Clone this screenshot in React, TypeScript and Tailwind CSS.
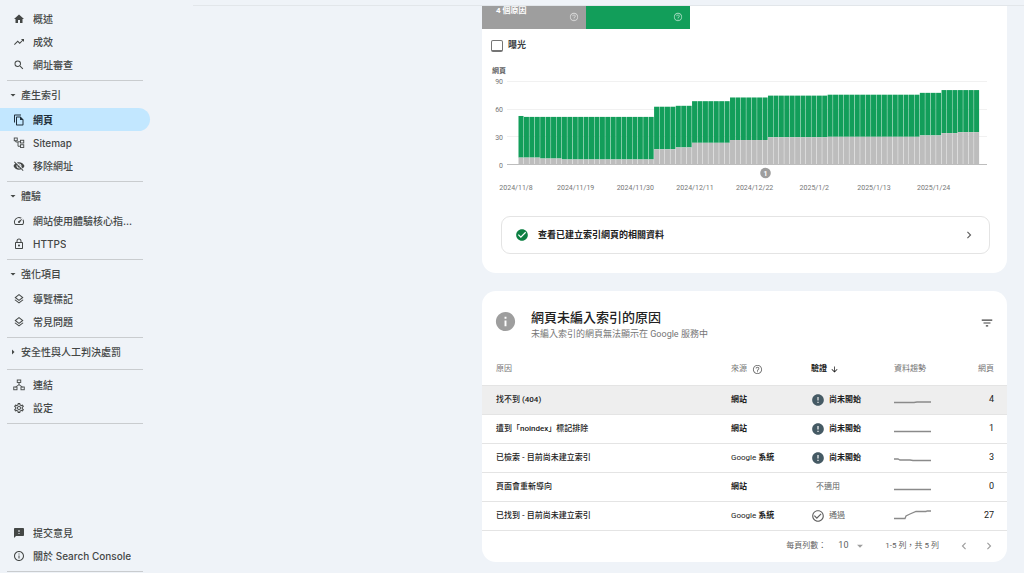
import type { ComponentType, ReactNode } from 'react';
import {
  MdArrowDownward,
  MdArrowDropDown,
  MdArrowRight,
  MdCheckCircle,
  MdCheckCircleOutline,
  MdChevronLeft,
  MdChevronRight,
  MdError,
  MdFeedback,
  MdFilterList,
  MdHelpOutline,
  MdHome,
  MdInfo,
  MdInfoOutline,
  MdOutlineFileCopy,
  MdOutlineLayers,
  MdOutlineLock,
  MdOutlineSettings,
  MdOutlineSpeed,
  MdSearch,
  MdTrendingUp,
  MdVisibilityOff,
} from 'react-icons/md';

type Icon = ComponentType<{ className?: string }>;

function SitemapIcon({ className }: { className?: string }) {
  return (
    <svg viewBox="0 0 24 24" width="1em" height="1em" fill="none" stroke="currentColor" strokeWidth="1.8" className={className}>
      <rect x="2.500" y="2" width="6" height="5.500" />
      <rect x="15" y="6.500" width="6.500" height="5.500" />
      <rect x="15" y="15.500" width="6.500" height="5.500" />
      <path d="M5.500 7.500V10H10v8.500H15M10 9.500H15" />
    </svg>
  );
}

function LinksIcon({ className }: { className?: string }) {
  return (
    <svg viewBox="0 0 24 24" width="1em" height="1em" fill="none" stroke="currentColor" strokeWidth="1.8" className={className}>
      <rect x="8.500" y="2" width="7" height="5" />
      <rect x="1.500" y="16" width="6.500" height="5.500" />
      <rect x="16" y="16" width="6.500" height="5.500" />
      <path d="M12 7v5M5 16 12 11.500 19 16" />
    </svg>
  );
}

function NavItem({ icon: Glyph, label, active = false }: { icon: Icon; label: string; active?: boolean }) {
  return (
    <li>
      <a
        href="#"
        aria-current={active ? 'page' : undefined}
        className={
          active
            ? 'flex h-[23px] w-[150px] items-center gap-2 rounded-r-full bg-[#c2e7ff] pl-[13px] font-bold text-[#1f2f3b]'
            : 'flex h-[23px] w-[150px] items-center gap-2 pl-[13px]'
        }
      >
        <Glyph className="size-3 shrink-0" />
        <span className="truncate pt-px">{label}</span>
      </a>
    </li>
  );
}

function NavHeading({ label, open = true }: { label: string; open?: boolean }) {
  return (
    <button type="button" aria-expanded={open} className="flex h-[27px] items-center gap-0.5 pl-[7px]">
      {open ? <MdArrowDropDown className="size-3" /> : <MdArrowRight className="size-3" />}
      <span className="pt-px">{label}</span>
    </button>
  );
}

function NavGroup({ children }: { children: ReactNode }) {
  return (
    <div>
      {children}
      <hr className="mt-1 ml-[7px] w-[136px] border-t border-[#c9cccf]" />
    </div>
  );
}

function Sidebar() {
  return (
    <nav className="flex w-[193px] shrink-0 flex-col pt-[7px] pb-px text-[10px] font-medium text-[#444746] [font-family:Inter,'Noto_Sans_CJK_TC',sans-serif]">
      <NavGroup>
        <ul>
          <NavItem icon={MdHome} label="概述" />
          <NavItem icon={MdTrendingUp} label="成效" />
          <NavItem icon={MdSearch} label="網址審查" />
        </ul>
      </NavGroup>
      <NavGroup>
        <NavHeading label="產生索引" />
        <ul>
          <NavItem icon={MdOutlineFileCopy} label="網頁" active />
          <NavItem icon={SitemapIcon} label="Sitemap" />
          <NavItem icon={MdVisibilityOff} label="移除網址" />
        </ul>
      </NavGroup>
      <NavGroup>
        <NavHeading label="體驗" />
        <ul>
          <NavItem icon={MdOutlineSpeed} label="網站使用體驗核心指..." />
          <NavItem icon={MdOutlineLock} label="HTTPS" />
        </ul>
      </NavGroup>
      <NavGroup>
        <NavHeading label="強化項目" />
        <ul>
          <NavItem icon={MdOutlineLayers} label="導覽標記" />
          <NavItem icon={MdOutlineLayers} label="常見問題" />
        </ul>
      </NavGroup>
      <NavGroup>
        <NavHeading label="安全性與人工判決處罰" open={false} />
      </NavGroup>
      <NavGroup>
        <ul className="pt-[3px]">
          <NavItem icon={LinksIcon} label="連結" />
          <NavItem icon={MdOutlineSettings} label="設定" />
        </ul>
      </NavGroup>
      <div className="mt-auto">
        <NavGroup>
          <ul>
            <NavItem icon={MdFeedback} label="提交意見" />
            <NavItem icon={MdInfoOutline} label="關於 Search Console" />
          </ul>
        </NavGroup>
      </div>
    </nav>
  );
}

// Consecutive days that share the same counts: [days, total pages, pages not indexed]
const RUNS: [number, number, number][] = [
  [1, 53, 8],
  [3, 52, 8],
  [4, 52, 7],
  [17, 52, 6],
  [4, 63, 17],
  [3, 64, 19],
  [7, 69, 24],
  [7, 73, 27],
  [11, 75, 30],
  [17, 76, 30.5],
  [4, 78, 32],
  [3, 81, 34.5],
  [4, 81, 35.5],
];
const DAYS = RUNS.flatMap(([days, total, excluded]) => Array.from({ length: days }, () => ({ total, excluded })));
const DATES = ['2024/11/8', '2024/11/19', '2024/11/30', '2024/12/11', '2024/12/22', '2025/1/2', '2025/1/13', '2025/1/24'];

function Chart() {
  const base = 103;
  const unit = 0.925;
  const step = 461 / 85;
  return (
    <svg viewBox="0 0 525 132" className="block w-full" role="img" aria-label="網頁">
      <g fontSize="7" fill="#757575">
        <text x="10" y="11" fontWeight="700" fill="#616161">網頁</text>
        {[90, 60, 30, 0].map((v) => (
          <g key={v}>
            <text x="21" y={base - v * unit + 2.5} textAnchor="end">{v}</text>
            {v > 0 && <path d={`M25 ${Math.round(base - v * unit) - 0.5}H505`} stroke="#f1f1f1" />}
          </g>
        ))}
        {DATES.map((date, i) => (
          <text key={date} x={34 + i * 59.66} y="127.500" textAnchor="middle">{date}</text>
        ))}
      </g>
      {DAYS.map(({ total, excluded }, i) => (
        <g key={i}>
          <rect x={36.5 + i * step} y={base - total * unit} width={step - 0.4} height={(total - excluded) * unit} fill="#129e5a" />
          <rect x={36.5 + i * step} y={base - excluded * unit} width={step - 0.4} height={excluded * unit} fill="#bdbdbd" />
        </g>
      ))}
      <path d="M25 102.500H505" stroke="#bdbdbd" />
      <circle cx="283.500" cy="111" r="5.300" fill="#9e9e9e" />
      <text x="283.500" y="113.500" textAnchor="middle" fontSize="7" fontWeight="700" fill="#fff">1</text>
    </svg>
  );
}

function CoverageCard() {
  return (
    <section className="rounded-b-[14px] bg-white pb-[19px]">
      <div className="flex h-[23px] text-white">
        <div className="flex w-[104px] justify-between bg-[#9e9e9e] pr-[7px] pl-3.5">
          <span className="text-[8px] leading-[10px] font-bold">4 個原因</span>
          <MdHelpOutline className="mt-[6px] size-2.5 opacity-60" />
        </div>
        <div className="flex w-[104px] justify-end bg-[#129e5a] pr-[7px]">
          <MdHelpOutline className="mt-[6px] size-2.5 opacity-60" />
        </div>
      </div>
      <label className="flex h-[33px] items-center gap-[5px] pl-[9px] text-[9px] font-bold text-[#3c4043]">
        <input type="checkbox" className="size-3 appearance-none rounded-[2px] border border-b-2 border-[#757575] bg-white" />
        曝光
      </label>
      <Chart />
      <a
        href="#"
        className="mt-[22px] mr-[17px] ml-[19px] flex h-[38px] items-center rounded-[9px] border border-[#e4e4e4] pr-[13px] pl-[13px] text-[9px] font-bold text-[#212121]"
      >
        <MdCheckCircle className="mr-[9px] size-3.5 text-[#0d8043]" />
        <span className="flex-1 pt-px">查看已建立索引網頁的相關資料</span>
        <MdChevronRight className="size-3.5 text-[#616161]" />
      </a>
    </section>
  );
}

type Status = 'pending' | 'none' | 'passed';
const REASONS: { reason: string; source: ReactNode; status: Status; trend: string; pages: number }[] = [
  { reason: '找不到 (404)', source: <b>網站</b>, status: 'pending', trend: 'M0 8.500H20L23 8H37', pages: 4 },
  { reason: '遭到「noindex」標記排除', source: <b>網站</b>, status: 'pending', trend: 'M0 8.500H37', pages: 1 },
  { reason: '已檢索 - 目前尚未建立索引', source: <>Google <b>系統</b></>, status: 'pending', trend: 'M0 7H4L6 8H16L19 8.500H37', pages: 3 },
  { reason: '頁面會重新導向', source: <b>網站</b>, status: 'none', trend: 'M0 8.500H37', pages: 0 },
  { reason: '已找到 - 目前尚未建立索引', source: <>Google <b>系統</b></>, status: 'passed', trend: 'M0 8.500H11L12 6 16 4 22 1.500H32L33 1H37', pages: 27 },
];

function StatusCell({ status }: { status: Status }) {
  if (status === 'none') return <span className="pl-[5px] text-[#616161]">不適用</span>;
  const pending = status === 'pending';
  return (
    <span className="flex items-center gap-1">
      {pending ? <MdError className="size-3.5 text-[#455a64]" /> : <MdCheckCircleOutline className="size-3.5 text-[#616161]" />}
      <span className={pending ? 'font-bold' : 'text-[#616161]'}>{pending ? '尚未開始' : '通過'}</span>
    </span>
  );
}

function ReasonsCard() {
  return (
    <section className="mt-[18px] rounded-[14px] bg-white">
      <header className="flex items-start pt-[18px] pr-[13px] pl-3">
        <MdInfo className="mt-px size-[23px] text-[#9e9e9e]" />
        <div className="ml-3.5 flex-1">
          <h2 className="text-[13px] leading-[18px] font-medium text-[#212121]">網頁未編入索引的原因</h2>
          <p className="text-[9px] leading-[14px] text-[#757575]">未編入索引的網頁無法顯示在 Google 服務中</p>
        </div>
        <button type="button" aria-label="篩選" className="mt-[7px]">
          <MdFilterList className="block size-3.5 text-[#424242]" />
        </button>
      </header>
      <table className="mt-[13px] w-full table-fixed text-left text-[8px] text-[#212121]">
        <colgroup>
          <col />
          <col className="w-20" />
          <col className="w-[83px]" />
          <col className="w-[60px]" />
          <col className="w-[53px]" />
        </colgroup>
        <thead className="text-[#757575]">
          <tr className="h-[31px] border-b border-[#e4e4e4]">
            <th className="pl-3.5 font-normal">原因</th>
            <th className="font-normal">
              <span className="flex items-center gap-[5px]">
                來源 <MdHelpOutline className="size-[11px]" />
              </span>
            </th>
            <th className="font-bold text-[#212121]">
              <span className="flex items-center gap-[3px]">
                驗證 <MdArrowDownward className="size-[9px]" />
              </span>
            </th>
            <th className="font-normal">資料趨勢</th>
            <th className="pr-[13px] text-right font-normal">網頁</th>
          </tr>
        </thead>
        <tbody>
          {REASONS.map((row, i) => (
            <tr
              key={row.reason}
              className={i === 0 ? 'h-[29px] border-b border-[#e4e4e4] bg-[#eeeeee]' : 'h-[29px] border-b border-[#e4e4e4]'}
            >
              <td className="pl-3.5 font-medium">{row.reason}</td>
              <td>{row.source}</td>
              <td>
                <StatusCell status={row.status} />
              </td>
              <td>
                <svg viewBox="0 0 37 12" className="block h-3 w-[37px]" fill="none" stroke="#8a8a8a" strokeWidth="1.3">
                  <path d={row.trend} />
                </svg>
              </td>
              <td className="pr-[13px] text-right text-[9px]">{row.pages}</td>
            </tr>
          ))}
        </tbody>
      </table>
      <footer className="flex h-[31px] items-center justify-end pr-[11px] text-[8px] text-[#616161]">
        <label className="flex items-center gap-3">
          每頁列數：
          <span className="flex items-center">
            <select className="w-[15px] appearance-none bg-transparent text-[9px]" defaultValue="10">
              <option>10</option>
              <option>25</option>
            </select>
            <MdArrowDropDown className="size-3.5 text-[#9e9e9e]" />
          </span>
        </label>
        <span className="ml-[18px]">1-5 列，共 5 列</span>
        <button type="button" aria-label="上一頁" className="ml-[18px]">
          <MdChevronLeft className="size-3.5 text-[#9e9e9e]" />
        </button>
        <button type="button" aria-label="下一頁" className="ml-[11px]">
          <MdChevronRight className="size-3.5 text-[#9e9e9e]" />
        </button>
      </footer>
    </section>
  );
}

export default function App() {
  return (
    <div className="flex min-h-screen bg-[#eff3f8] [font-family:Roboto,'Noto_Sans_CJK_TC',sans-serif]">
      <Sidebar />
      <div className="min-w-0 flex-1">
        <div className="h-1.5 border-b border-[#e2e6ea]" />
        <main className="pr-[17px] pb-[11px] pl-[289px]">
          <CoverageCard />
          <ReasonsCard />
        </main>
      </div>
    </div>
  );
}
